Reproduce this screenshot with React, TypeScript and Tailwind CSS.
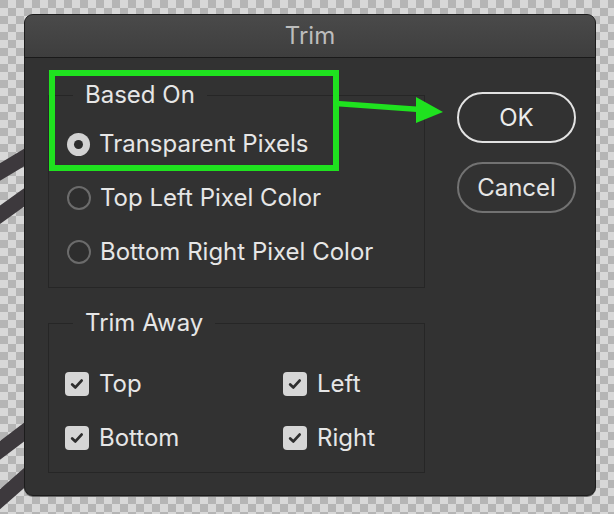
import React from "react";

const font = { fontFamily: "Inter, 'Noto Sans', sans-serif" };

// --- RADIO ---
const Radio = ({ checked, label }: { checked?: boolean; label: string }) => (
  <div className="flex items-center h-[54px] pl-[18px]">
    {checked ? (
      <span className="w-[23px] h-[23px] rounded-full bg-[#d2d2d2] flex items-center justify-center">
        <span className="w-[9px] h-[9px] rounded-full bg-[#2c2c2c]" />
      </span>
    ) : (
      <span className="w-[24px] h-[24px] rounded-full border-2 border-[#6b6b6b] bg-[#2e2e2e]" />
    )}
    <span className="ml-[9px] text-[24px] text-[#e6e6e6] leading-none">{label}</span>
  </div>
);

// --- CHECKBOX ---
const Check = ({ label }: { label: string }) => (
  <div className="flex items-center h-[54px]">
    <span className="w-[24px] h-[24px] rounded-[4px] bg-[#d6d6d6] flex items-center justify-center">
      <svg width="16" height="16" viewBox="0 0 16 16">
        <path d="M3.2 8.4 L6.4 11.4 L12.6 4.6" fill="none" stroke="#2e2e2e" strokeWidth="2.8" strokeLinecap="round" strokeLinejoin="round" />
      </svg>
    </span>
    <span className="ml-[10px] text-[24px] text-[#e6e6e6] leading-none">{label}</span>
  </div>
);

export default function App() {
  return (
    <div
      style={font}
      className="relative w-[614px] h-[514px] overflow-hidden pt-[14px] pl-[24px] bg-[repeating-conic-gradient(#d8d8d8_0_25%,#b5b5b5_0_50%)] bg-[length:16px_16px]"
    >
      {/* brush strokes behind the dialog */}
      <svg className="absolute left-0 top-0" width="614" height="514">
        <g stroke="#3d393d" strokeWidth="15" strokeLinecap="round" fill="none">
          <path d="M-10 178 L40 148" />
          <path d="M-10 222 L40 186" />
          <path d="M-10 458 L40 420" />
          <path d="M-10 508 L40 464" />
        </g>
      </svg>

      {/* DIALOG */}
      <div className="relative w-[572px] h-[482px] rounded-[9px] bg-[#323232] border border-[#1c1c1c] shadow-[0_1px_0_#6a6a6a] overflow-hidden flex flex-col">
        <div className="h-[43px] shrink-0 bg-gradient-to-b from-[#4a4a4a] to-[#3e3e3e] border-b border-[#1a1a1a] flex items-center justify-center">
          <span className="text-[24px] text-[#bdbdbd]">Trim</span>
        </div>

        <div className="flex">
          <div className="ml-[23px] w-[377px] pt-[23px] flex flex-col gap-[21px]">
            <fieldset className="border border-[#262626] pb-[8px]">
              <legend className="ml-[24px] px-[12px] text-[24px] leading-[28px] text-[#e6e6e6]">Based On</legend>
              <div className="pt-[8px]">
                <Radio checked label="Transparent Pixels" />
                <Radio label="Top Left Pixel Color" />
                <Radio label="Bottom Right Pixel Color" />
              </div>
            </fieldset>

            <fieldset className="border border-[#262626] pb-[7px]">
              <legend className="ml-[24px] px-[12px] text-[24px] leading-[28px] text-[#e6e6e6]">Trim Away</legend>
              <div className="pt-[20px] pl-[16px] grid grid-cols-[218px_1fr]">
                <Check label="Top" />
                <Check label="Left" />
                <Check label="Bottom" />
                <Check label="Right" />
              </div>
            </fieldset>
          </div>

          <div className="ml-[32px] pt-[34px] flex flex-col gap-[19px]">
            <button className="w-[119px] h-[51px] rounded-full border-2 border-[#e2e2e2] text-[24px] text-[#ececec]">OK</button>
            <button className="w-[119px] h-[51px] rounded-full border-2 border-[#727272] text-[24px] text-[#e6e6e6]">Cancel</button>
          </div>
        </div>
      </div>

      {/* annotation */}
      <div className="absolute left-[49px] top-[70px] w-[290px] h-[101px] border-[6px] border-[#1fe21f]" />
      <svg className="absolute left-0 top-0 pointer-events-none" width="614" height="514">
        <path d="M336 103.5 L420 109.5" stroke="#1fe21f" strokeWidth="5.5" />
        <path d="M416 97 L443 112 L416 123 Z" fill="#1fe21f" />
      </svg>
    </div>
  );
}
